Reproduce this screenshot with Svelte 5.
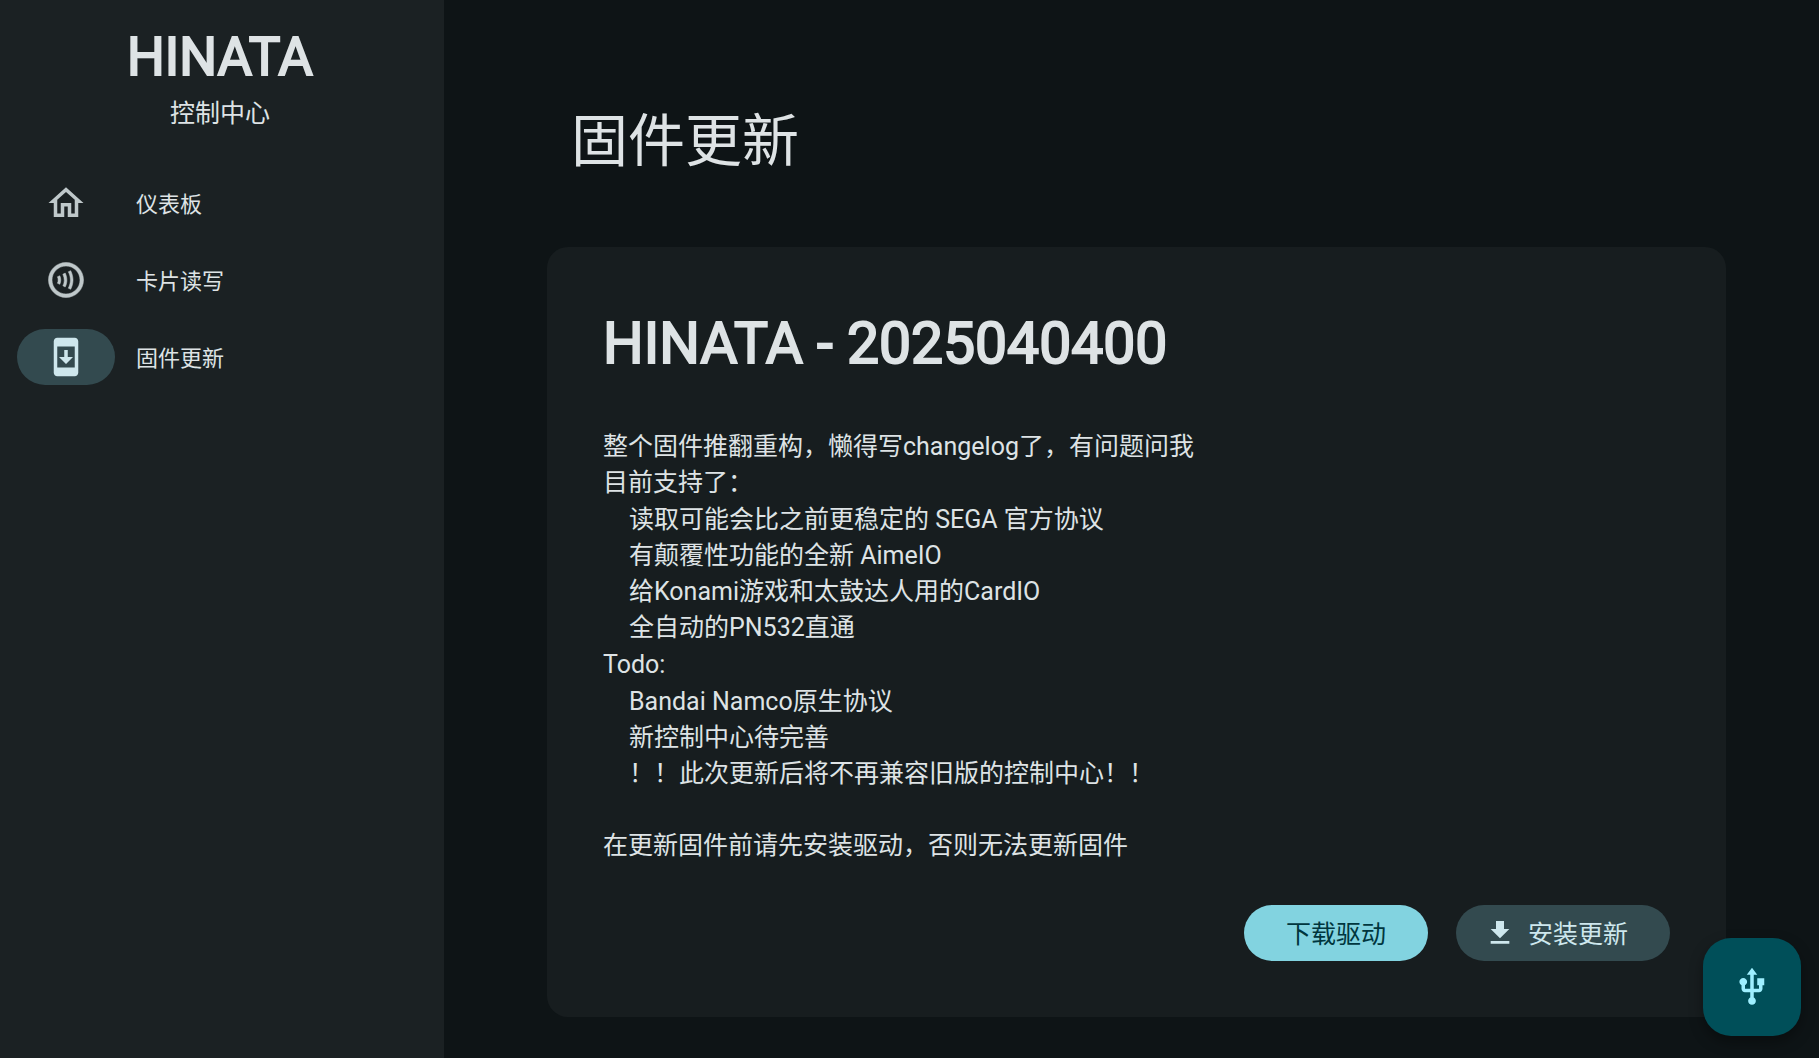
<script>
  const navItems = [
    { id: 'dashboard', label: '仪表板' },
    { id: 'card', label: '卡片读写' },
    { id: 'firmware', label: '固件更新' },
  ];

  const icons = {
    dashboard: 'M12 5.69l5 4.5V18h-2v-6H9v6H7v-7.81l5-4.5M12 3L2 12h3v8h6v-6h2v6h6v-8h3L12 3z',
    card: 'M12 2C6.48 2 2 6.48 2 12s4.48 10 10 10 10-4.48 10-10S17.52 2 12 2zm0 18c-4.42 0-8-3.58-8-8s3.58-8 8-8 8 3.58 8 8-3.58 8-8 8z M7.1 10.18c.26.56.39 1.16.4 1.8.01.63-.13 1.25-.4 1.86l1.37.62c.37-.81.55-1.65.54-2.5-.01-.84-.19-1.65-.54-2.4L7.1 10.18z M13.33 7.33c.78 1.57 1.18 3.14 1.18 4.64 0 1.51-.4 3.09-1.18 4.69l1.35.66c.88-1.81 1.33-3.61 1.33-5.35 0-1.74-.45-3.53-1.33-5.31L13.33 7.33z M10.2 8.72c.53 1.07.8 2.21.8 3.4 0 1.17-.26 2.23-.78 3.15l1.3.74c.65-1.15.98-2.45.98-3.89 0-1.42-.32-2.79-.96-4.07L10.2 8.72z',
    firmware: 'M17 1.01L7 1c-1.1 0-2 .9-2 2v18c0 1.1.9 2 2 2h10c1.1 0 2-.9 2-2V3c0-1.1-.9-1.99-2-1.99zM17 18H7V6h10v12zm-1-6h-3V8h-2v4H8l4 4 4-4z',
    download: 'M19 9h-4V3H9v6H5l7 7 7-7zM5 18v2h14v-2H5z',
    usb: 'M15 7v4h1v2h-3V5h2l-3-4-3 4h2v8H8v-2.07c.7-.37 1.2-1.08 1.2-1.93 0-1.21-.99-2.2-2.2-2.2-1.21 0-2.2.99-2.2 2.2 0 .85.5 1.56 1.2 1.93V13c0 1.11.89 2 2 2h3v3.05c-.71.37-1.2 1.1-1.2 1.95 0 1.22.99 2.2 2.2 2.2 1.21 0 2.2-.98 2.2-2.2 0-.85-.49-1.58-1.2-1.95V15h3c1.11 0 2-.89 2-2v-2h1V7h-4z',
  };

  const supported = [
    '读取可能会比之前更稳定的 SEGA 官方协议',
    '有颠覆性功能的全新 AimeIO',
    '给Konami游戏和太鼓达人用的CardIO',
    '全自动的PN532直通',
  ];

  const todo = [
    'Bandai Namco原生协议',
    '新控制中心待完善',
    '！！此次更新后将不再兼容旧版的控制中心！！',
  ];

  let active = $state('firmware');
</script>

{#snippet icon(name)}
  <svg class="icon" class:outlined={name === 'card'} viewBox="0 0 24 24" aria-hidden="true">
    <path d={icons[name]} />
  </svg>
{/snippet}

<div class="app" lang="zh-CN">
  <aside class="sidebar">
    <div class="brand">HINATA</div>
    <div class="subtitle">控制中心</div>
    <nav>
      {#each navItems as item}
        <a
          href="#{item.id}"
          class="nav-item"
          class:active={active === item.id}
          aria-current={active === item.id ? 'page' : undefined}
          onclick={() => (active = item.id)}
        >
          <span class="pill">{@render icon(item.id)}</span>
          <span class="label">{item.label}</span>
        </a>
      {/each}
    </nav>
  </aside>

  <main>
    <h1>固件更新</h1>
    <section class="card">
      <h2>HINATA - 2025040400</h2>
      <div class="changelog">
        <p>整个固件推翻重构，懒得写changelog了，有问题问我</p>
        <p>目前支持了：</p>
        <ul>
          {#each supported as line}
            <li>{line}</li>
          {/each}
        </ul>
        <p>Todo:</p>
        <ul>
          {#each todo as line}
            <li>{line}</li>
          {/each}
        </ul>
        <p class="note">在更新固件前请先安装驱动，否则无法更新固件</p>
      </div>
      <div class="actions">
        <button class="btn filled"><span class="label">下载驱动</span></button>
        <button class="btn tonal">
          {@render icon('download')}
          <span class="label">安装更新</span>
        </button>
      </div>
    </section>
  </main>

  <button class="fab" aria-label="USB">{@render icon('usb')}</button>
</div>

<style>
  :global(body) {
    background: #0e1416;
  }

  .app {
    display: flex;
    min-height: 100vh;
    color: #dee3e5;
    font-family: Roboto, 'Noto Sans CJK SC', sans-serif;
    font-size: 25px;
    line-height: 36px;
  }

  .icon {
    width: 42px;
    height: 42px;
    fill: currentColor;
    flex-shrink: 0;
  }

  .outlined {
    stroke: currentColor;
    stroke-width: 0.3;
  }

  /* CJK glyphs sit high next to an icon */
  .label {
    padding-top: 3px;
  }

  .sidebar {
    box-sizing: border-box;
    width: 444px;
    flex-shrink: 0;
    padding: 25px 4px 0 0;
    background: #1b2123;
  }

  .brand {
    font-size: 53px;
    line-height: 64px;
    text-align: center;
    -webkit-text-stroke: 2px currentColor;
  }

  .subtitle {
    margin-top: 7px;
    text-align: center;
  }

  nav {
    display: flex;
    flex-direction: column;
    gap: 21px;
    margin-top: 43px;
    padding: 0 17px;
  }

  .nav-item {
    display: flex;
    align-items: center;
    gap: 21px;
    color: inherit;
    font-size: 22px;
    text-decoration: none;
  }

  .pill {
    display: flex;
    align-items: center;
    justify-content: center;
    width: 98px;
    height: 56px;
    border-radius: 28px;
    color: #bfc8ca;
  }

  .active .pill {
    background: #334a4f;
    color: #cee7ed;
  }

  main {
    flex: 1;
    min-width: 0;
    padding: 100px 93px 42px 103px;
  }

  h1 {
    margin: 0 24px 63px;
    font-size: 57px;
    font-weight: 400;
    line-height: 84px;
  }

  .card {
    padding: 56px;
    border-radius: 21px;
    background: #171d1f;
  }

  h2 {
    margin: 0 0 44px;
    font-size: 57px;
    font-weight: 400;
    line-height: 82px;
    -webkit-text-stroke: 2px currentColor;
  }

  p,
  ul {
    margin: 0;
  }

  ul {
    padding: 1px 0 1px 26px;
    list-style: none;
  }

  .note {
    margin-top: 35px;
  }

  .actions {
    display: flex;
    justify-content: flex-end;
    gap: 28px;
    margin-top: 41px;
  }

  .btn {
    display: flex;
    align-items: center;
    gap: 12px;
    height: 56px;
    padding: 0 42px;
    border: none;
    border-radius: 28px;
    font: inherit;
    cursor: pointer;
  }

  .btn .icon {
    width: 32px;
    height: 32px;
  }

  .filled {
    background: #82d3e0;
    color: #00363e;
  }

  .tonal {
    padding-left: 28px;
    background: #334a4f;
    color: #cee7ed;
  }

  .fab {
    position: fixed;
    right: 18px;
    bottom: 22px;
    display: flex;
    align-items: center;
    justify-content: center;
    width: 98px;
    height: 98px;
    padding: 0;
    border: none;
    border-radius: 28px;
    background: #004f59;
    color: #9eefff;
    box-shadow: 0 6px 14px rgba(0, 0, 0, 0.35);
    cursor: pointer;
  }
</style>
